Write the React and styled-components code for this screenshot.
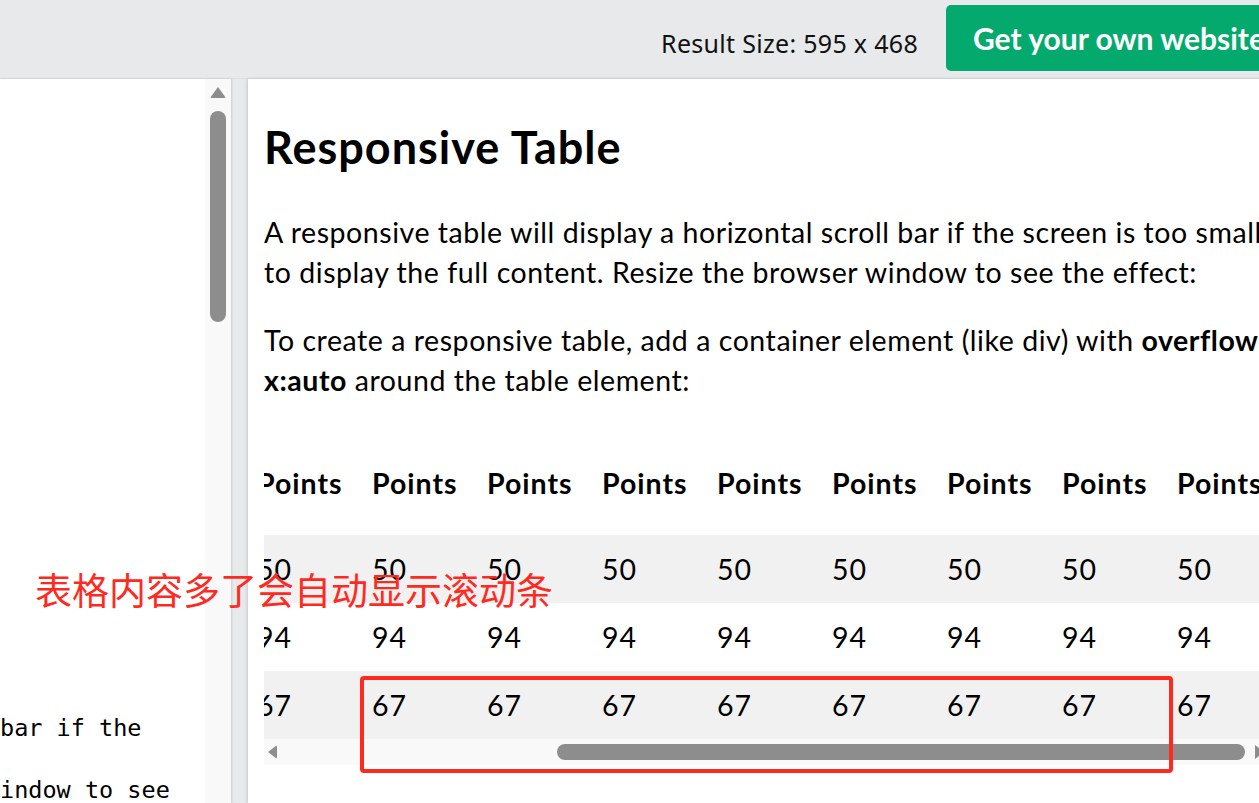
import styled, { createGlobalStyle } from 'styled-components';

const GlobalStyle = createGlobalStyle`
  html, body {
    margin: 0;
    padding: 0;
    background: #e7e9eb;
    overflow: hidden;
  }
  * {
    box-sizing: border-box;
  }
`;

const Page = styled.div`
  position: relative;
  width: 1259px;
  height: 803px;
  overflow: hidden;
  background: #e7e9eb;
  font-family: Lato, 'Liberation Sans', sans-serif;
  color: #000;
`;

const TopBar = styled.div`
  height: 79px;
  display: flex;
  align-items: center;
  justify-content: flex-end;
  padding-bottom: 2px;
  border-bottom: 1px solid #dcdee0;
`;

const ResultSize = styled.span`
  font-family: 'Noto Sans', 'Open Sans', sans-serif;
  font-size: 25px;
  letter-spacing: 0.3px;
  color: #111;
  margin: 9px 28px 0 0;
`;

const OwnSiteButton = styled.button`
  flex: none;
  width: 340px;
  height: 66px;
  margin-right: -27px;
  padding: 0 0 0 27px;
  border: none;
  border-radius: 5px;
  background: #04aa6d;
  color: #fff;
  font-family: Lato, sans-serif;
  font-weight: 700;
  font-size: 30px;
  text-align: left;
  white-space: nowrap;
`;

const Workspace = styled.div`
  display: flex;
  height: 724px;
`;

const CodePane = styled.div`
  flex: none;
  width: 231px;
  display: flex;
  background: #fff;
  box-shadow: 1px 0 2px rgba(0, 0, 0, 0.12);
`;

const CodeText = styled.div`
  flex: 1;
  display: flex;
  flex-direction: column;
  justify-content: flex-end;
  overflow: hidden;
  font-family: 'DejaVu Sans Mono', 'Liberation Mono', monospace;
  font-size: 23.5px;
  line-height: 31px;
  white-space: pre;
  margin-bottom: -3px;
`;

const VTrack = styled.div`
  flex: none;
  width: 26px;
  background: #f9f9f9;
  display: flex;
  flex-direction: column;
  align-items: center;
  padding-top: 8px;
`;

const ArrowUp = styled.div`
  width: 0;
  height: 0;
  border-left: 8px solid transparent;
  border-right: 8px solid transparent;
  border-bottom: 11px solid #8d8d8d;
  border-radius: 2px;
`;

const VThumb = styled.div`
  width: 16px;
  height: 211px;
  margin-top: 13px;
  border-radius: 8px;
  background: #8d8d8d;
`;

const Divider = styled.div`
  flex: none;
  width: 17px;
`;

const ResultPane = styled.div`
  flex: none;
  width: 1030px;
  background: #fff;
  padding-left: 16px;
  overflow: hidden;
  box-shadow: -1px 0 3px rgba(0, 0, 0, 0.15);
`;

const Heading = styled.h2`
  margin: 41px 0 38px;
  font-size: 45px;
  letter-spacing: 1px;
  line-height: 1.2;
  font-weight: 700;
`;

const Para = styled.p`
  margin: 0 0 28px;
  font-size: 28.5px;
  letter-spacing: 0.55px;
  line-height: 40px;
  white-space: nowrap;
`;

const TableScroller = styled.div`
  margin-top: 48px;
  width: 1010px;
`;

const TableViewport = styled.div`
  overflow: hidden;
`;

const Table = styled.table`
  margin-left: -19px;
  border-collapse: collapse;
  table-layout: fixed;
  width: 1150px;
  font-size: 28.5px;
  letter-spacing: 1px;
  line-height: 40px;
`;

const HeadCell = styled.th`
  width: 115px;
  padding: 15px 12px 32px;
  text-align: left;
  font-weight: 700;
  white-space: nowrap;
`;

const Row = styled.tr`
  background: ${(p) => (p.$shaded ? '#f1f1f1' : '#fff')};
`;

const Cell = styled.td`
  padding: 14px 12px;
  white-space: nowrap;
`;

const HScrollBar = styled.div`
  height: 26px;
  background: #f9f9f9;
  display: flex;
  align-items: center;
`;

const ArrowLeft = styled.div`
  flex: none;
  margin-left: 4px;
  width: 0;
  height: 0;
  border-top: 7px solid transparent;
  border-bottom: 7px solid transparent;
  border-right: 9px solid #8d8d8d;
  border-radius: 2px;
`;

const HThumb = styled.div`
  flex: none;
  width: 688px;
  height: 16px;
  margin-left: 280px;
  border-radius: 8px;
  background: #8d8d8d;
`;

const ArrowRight = styled.div`
  flex: none;
  margin-left: 10px;
  width: 0;
  height: 0;
  border-top: 7px solid transparent;
  border-bottom: 7px solid transparent;
  border-left: 9px solid #8d8d8d;
`;

const Annotation = styled.div`
  position: absolute;
  left: 35px;
  top: 571px;
  font-family: 'Noto Sans CJK SC', sans-serif;
  font-size: 37px;
  line-height: 1;
  color: #ff2a1f;
  white-space: nowrap;
`;

const Highlight = styled.div`
  position: absolute;
  left: 360px;
  top: 676px;
  width: 813px;
  height: 97px;
  border: 4px solid #ff2a1f;
  border-radius: 4px;
`;

const columns = Array.from({ length: 10 });
const rows = ['50', '94', '67'];

export default function App() {
  return (
    <>
      <GlobalStyle />
      <Page>
        <TopBar>
          <ResultSize>Result Size: 595 x 468</ResultSize>
          <OwnSiteButton>Get your own website</OwnSiteButton>
        </TopBar>
        <Workspace>
          <CodePane>
            <CodeText>
              <div>bar if the</div>
              <div> </div>
              <div>indow to see</div>
            </CodeText>
            <VTrack>
              <ArrowUp />
              <VThumb />
            </VTrack>
          </CodePane>
          <Divider />
          <ResultPane>
            <Heading>Responsive Table</Heading>
            <Para>
              A responsive table will display a horizontal scroll bar if the screen is too small
              <br />
              to display the full content. Resize the browser window to see the effect:
            </Para>
            <Para>
              To create a responsive table, add a container element (like div) with <b>overflow-</b>
              <br />
              <b>x:auto</b> around the table element:
            </Para>
            <TableScroller>
              <TableViewport>
                <Table>
                  <tbody>
                    <Row>
                      {columns.map((_, i) => (
                        <HeadCell key={i}>Points</HeadCell>
                      ))}
                    </Row>
                    {rows.map((value, r) => (
                      <Row key={r} $shaded={r % 2 === 0}>
                        {columns.map((_, i) => (
                          <Cell key={i}>{value}</Cell>
                        ))}
                      </Row>
                    ))}
                  </tbody>
                </Table>
              </TableViewport>
              <HScrollBar>
                <ArrowLeft />
                <HThumb />
                <ArrowRight />
              </HScrollBar>
            </TableScroller>
          </ResultPane>
        </Workspace>
        <Annotation>表格内容多了会自动显示滚动条</Annotation>
        <Highlight />
      </Page>
    </>
  );
}
